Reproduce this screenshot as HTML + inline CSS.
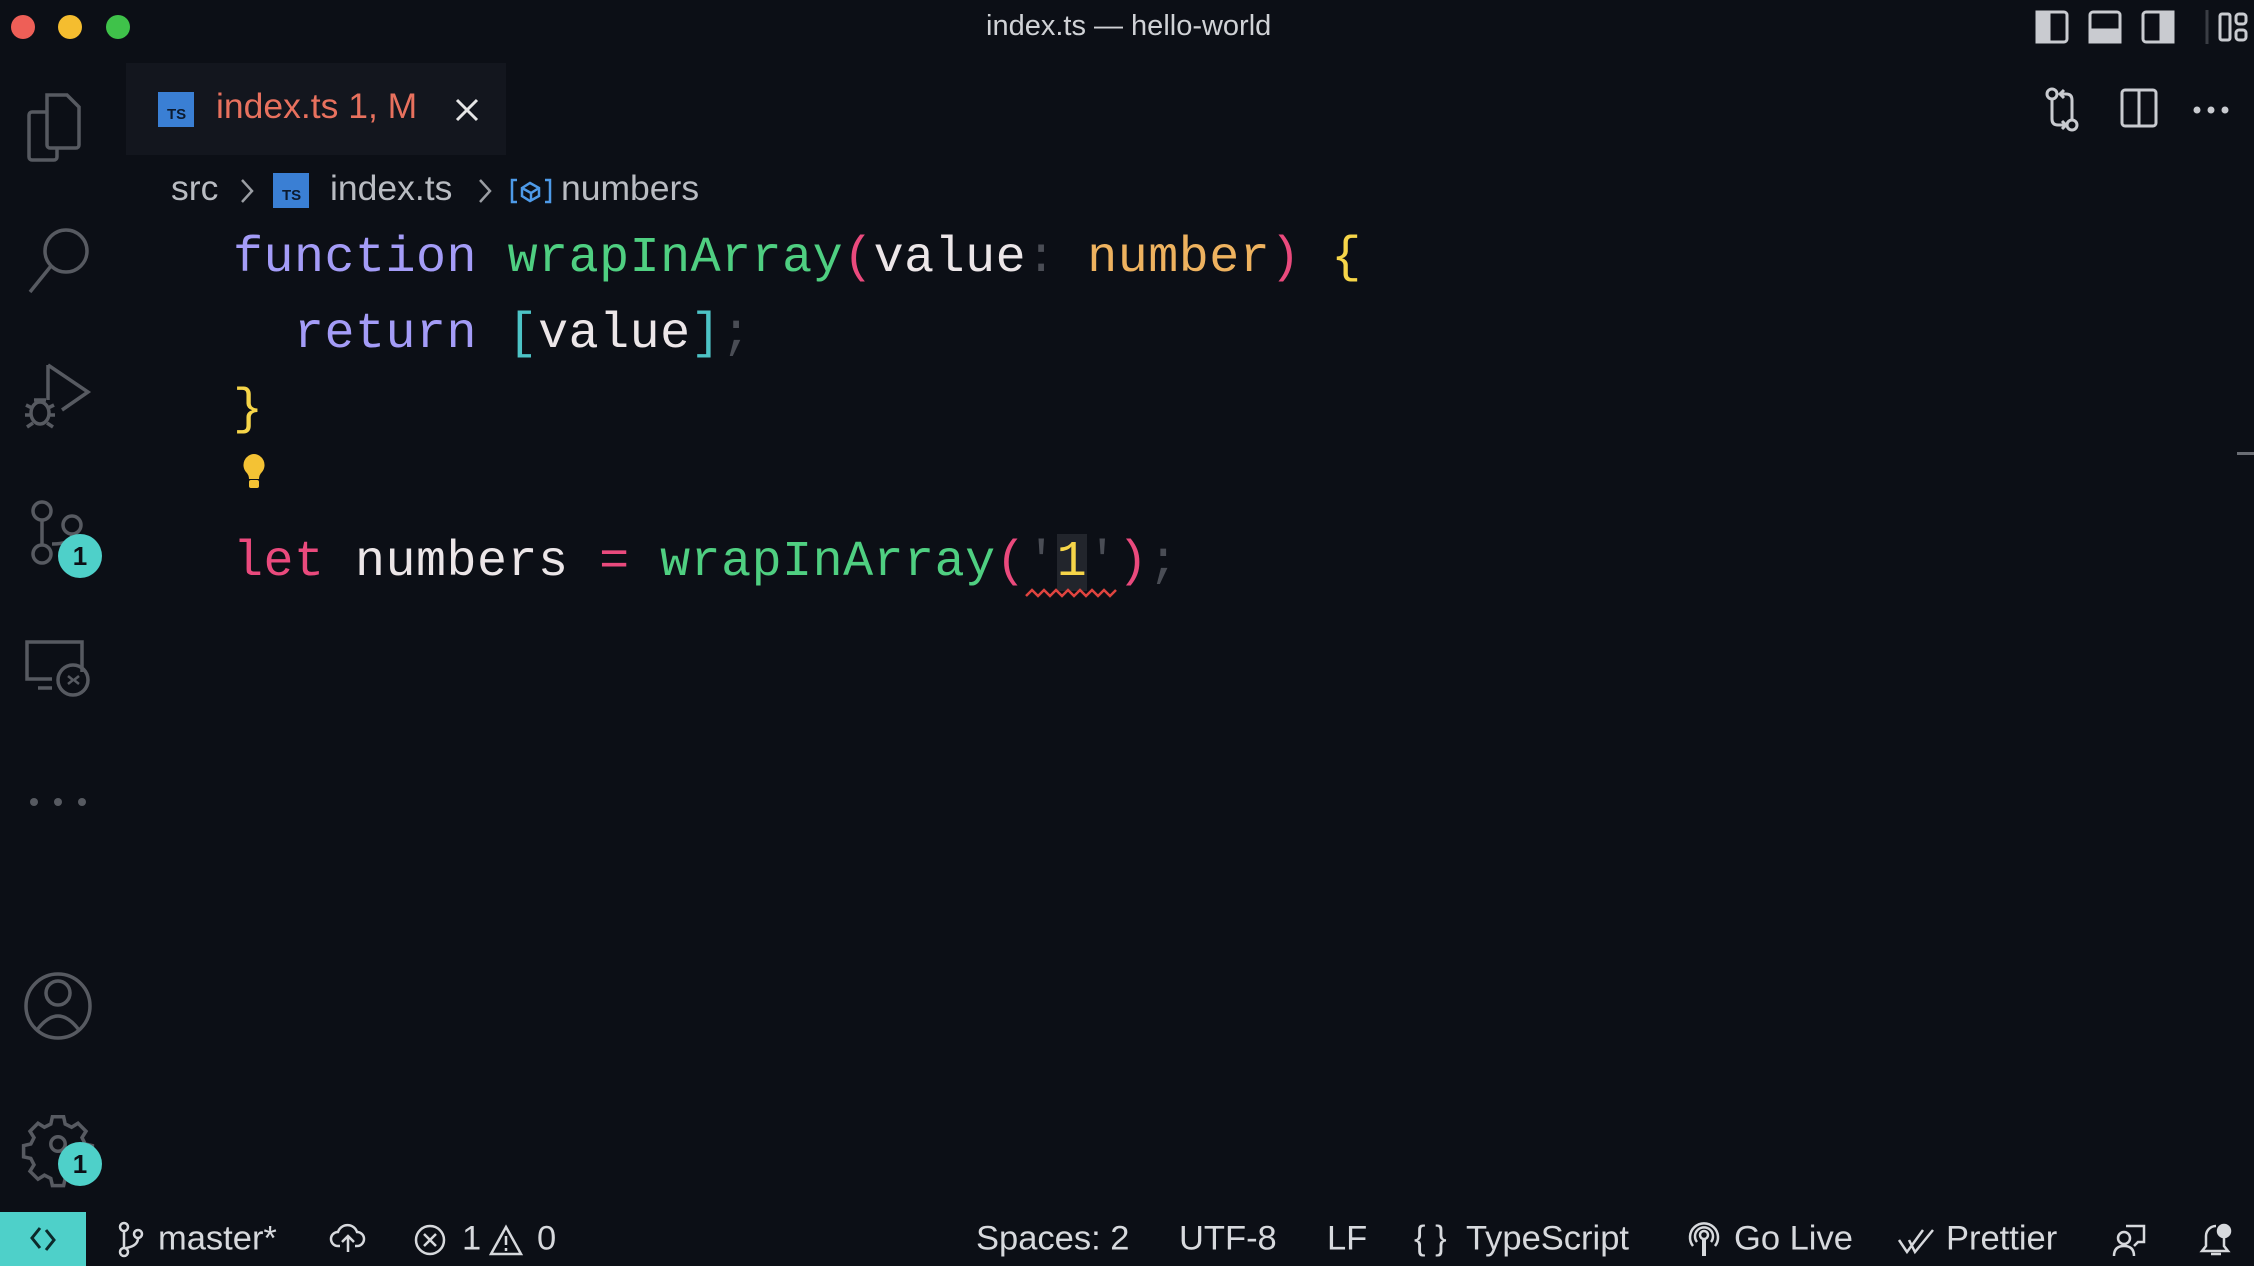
<!DOCTYPE html>
<html><head><meta charset="utf-8"><style>
*{margin:0;padding:0;box-sizing:border-box}
body{width:2254px;height:1266px;background:#0c0f16;position:relative;overflow:hidden;font-family:"Liberation Sans",sans-serif;color:#cfd2d8}
.a{position:absolute}
.dot{position:absolute;width:24px;height:24px;border-radius:50%;top:15px}
.code{position:absolute;left:233px;font-family:"Liberation Mono",monospace;font-size:50px;line-height:76px;white-space:pre;letter-spacing:0.5px}
.ln{position:absolute;left:0;height:76px}
.pu{color:#a49cf7}.gr{color:#4fcf81}.wh{color:#ece6e8}.or{color:#eeb25f}.pk{color:#ea4a7d}.ye{color:#f6d549}.tq{color:#4dc3c6}.gy{color:#4a4d55}
.sb{position:absolute;top:1239px;transform:translateY(-50%);font-size:34.5px;color:#d7d9dd;white-space:nowrap}
.badge{position:absolute;width:44px;height:44px;border-radius:50%;background:#4ed0c9;color:#0c0f16;font-weight:bold;font-size:26px;text-align:center;line-height:44px}
svg{position:absolute;overflow:visible}
</style></head><body>
<div class="dot" style="left:11px;background:#ee5f57"></div>
<div class="dot" style="left:58px;background:#f5bd2f"></div>
<div class="dot" style="left:106px;background:#3fc24a"></div>
<div class="a" style="left:986px;top:10px;font-size:29px;color:#d0d2d6">index.ts — hello-world</div>

<svg style="left:2035px;top:10px" width="220" height="34" fill="none" stroke="#c9cbd0" stroke-width="3">
<rect x="2" y="2" width="30" height="30" rx="3"/><rect x="2" y="2" width="12" height="30" fill="#c9cbd0"/>
<rect x="55" y="2" width="30" height="30" rx="3"/><rect x="55" y="20" width="30" height="12" fill="#c9cbd0"/>
<rect x="108" y="2" width="30" height="30" rx="3"/><rect x="126" y="2" width="12" height="30" fill="#c9cbd0"/>
<line x1="172" y1="0" x2="172" y2="34" stroke="#3a3d44"/>
<rect x="185" y="4" width="10" height="26" rx="2"/><rect x="201" y="4" width="10" height="10" rx="3"/><rect x="201" y="20" width="10" height="10" rx="3"/>
</svg>
<svg style="left:2040px;top:88px" width="210" height="44" fill="none" stroke="#c9cbd0" stroke-width="3">
<circle cx="12" cy="6" r="5"/><path d="M12 11v20q0 6 6 6h8M22 33l4 4-4 4"/><circle cx="32" cy="37" r="5"/><path d="M32 32V12q0-6-6-6h-6M24 2l-4 4 4 4"/>
<rect x="82" y="2" width="34" height="36" rx="3"/><line x1="99" y1="2" x2="99" y2="38"/>
<circle cx="157" cy="22" r="2" fill="#c9cbd0"/><circle cx="171" cy="22" r="2" fill="#c9cbd0"/><circle cx="185" cy="22" r="2" fill="#c9cbd0"/>
</svg>

<div class="a" style="left:126px;top:63px;width:380px;height:92px;background:#13161e"></div>
<div class="a" style="left:158px;top:92px;width:36px;height:35px;background:#3a7fd4;color:#0c1a2e;font-size:15px;font-weight:bold;padding:14px 0 0 9px;line-height:18px">TS</div>
<div class="a" style="left:216px;top:86px;font-size:35.5px;color:#e8715e">index.ts 1, M</div>
<svg style="left:456px;top:99px" width="22" height="22" stroke="#e6e6e6" stroke-width="3"><path d="M1 1L21 21M21 1L1 21"/></svg>

<div class="a" style="left:171px;top:168px;font-size:35.5px;color:#b9bcc2;white-space:nowrap">src</div>
<svg style="left:240px;top:178px" width="14" height="26" fill="none" stroke="#9a9da3" stroke-width="2.5"><path d="M2 2l10 11-10 11"/></svg>
<div class="a" style="left:273px;top:173px;width:36px;height:35px;background:#3a7fd4;color:#0c1a2e;font-size:15px;font-weight:bold;padding:14px 0 0 9px;line-height:18px">TS</div>
<div class="a" style="left:330px;top:168px;font-size:35.5px;color:#b9bcc2">index.ts</div>
<svg style="left:478px;top:178px" width="14" height="26" fill="none" stroke="#9a9da3" stroke-width="2.5"><path d="M2 2l10 11-10 11"/></svg>
<svg style="left:510px;top:178px" width="42" height="26" fill="none" stroke="#4e9ae8" stroke-width="2.5"><path d="M7 2H2v22h5M35 2h5v22h-5"/><path d="M12 10l8-5 9 5v8l-9 5-8-5z"/><path d="M12 10l9 5 8-5M21 15v8"/></svg>
<div class="a" style="left:561px;top:168px;font-size:35.5px;color:#b9bcc2">numbers</div>

<div class="code" style="top:221px">
<div class="ln" style="top:0"><span class="pu">function</span> <span class="gr">wrapInArray</span><span class="pk">(</span><span class="wh">value</span><span class="gy">:</span> <span class="or">number</span><span class="pk">)</span> <span class="ye">{</span></div>
<div class="ln" style="top:76px">  <span class="pu">return</span> <span class="tq">[</span><span class="wh">value</span><span class="tq">]</span><span class="gy">;</span></div>
<div class="ln" style="top:152px"><span class="ye">}</span></div>
<div class="ln" style="top:304px"><span class="pk">let</span> <span class="wh">numbers</span> <span class="pk">=</span> <span class="gr">wrapInArray</span><span class="pk">(</span><span class="gy">'</span><span class="ye" style="background:#22252c">1</span><span class="gy">'</span><span class="pk">)</span><span class="gy">;</span></div>
</div>
<svg style="left:239px;top:452px" width="30" height="38"><path d="M15 2a11 11 0 0 0-8 18q3 3 3 7h10q0-4 3-7a11 11 0 0 0-8-18z" fill="#f4c234"/><rect x="10" y="28" width="10" height="8" rx="2" fill="#f4c234"/></svg>
<svg style="left:1026px;top:588px" width="96" height="12" fill="none" stroke="#e0443f" stroke-width="2.5"><path d="M0 8l6-6 6 6 6-6 6 6 6-6 6 6 6-6 6 6 6-6 6 6 6-6 6 6 6-6 6 6 6-6"/></svg>
<div class="a" style="left:2237px;top:452px;width:17px;height:3px;background:#6a6d74"></div>

<svg style="left:0;top:0" width="120" height="1200" fill="none" stroke="#575a61" stroke-width="3.5">
<path d="M47 95h20l12 12v38a3 3 0 0 1-3 3H50a3 3 0 0 1-3-3z"/><path d="M47 112H32a3 3 0 0 0-3 3v42a3 3 0 0 0 3 3h22a3 3 0 0 0 3-3v-9"/>
<circle cx="66" cy="251" r="21"/><path d="M51 266L30 292"/>
<path d="M48 365v35M48 365l40 27-26 18"/><ellipse cx="40" cy="413" rx="9" ry="11"/><path d="M26 405l6 3M54 405l-6 3M25 415h6M49 415h6M27 427l6-4M53 427l-6-4M34 400h12"/>
<circle cx="42" cy="511" r="9"/><circle cx="72" cy="525" r="9"/><circle cx="42" cy="554" r="9"/><path d="M42 520v25M72 534q0 10-20 10"/>
<path d="M82 672v-30H27v37h25M38 688h14"/><circle cx="73" cy="680" r="15"/><path d="M68 676l5 4-5 4M79 676l-5 4 5 4" stroke-width="2.5"/>
<circle cx="58" cy="1006" r="32"/><circle cx="58" cy="993" r="12"/><path d="M37 1030q21-28 42 0"/>
<g transform="translate(58 1144) scale(0.8) translate(-58 -1144)"><path d="M51 1110h14l2 9 8 4 8-5 10 10-5 8 4 8 9 2v14l-9 2-4 8 5 8-10 10-8-5-8 4-2 9H51l-2-9-8-4-8 5-10-10 5-8-4-8-9-2v-14l9-2 4-8-5-8 10-10 8 5 8-4z" stroke-width="4.4"/><circle cx="58" cy="1144" r="9" stroke-width="4.4"/></g>
</svg>
<svg style="left:30px;top:798px" width="60" height="8" fill="#575a61"><circle cx="4" cy="4" r="4"/><circle cx="28" cy="4" r="4"/><circle cx="52" cy="4" r="4"/></svg>
<div class="badge" style="left:58px;top:534px">1</div>
<div class="badge" style="left:58px;top:1142px">1</div>

<div class="a" style="left:0;top:1212px;width:86px;height:54px;background:#4ed0c9"></div>
<svg style="left:26px;top:1224px" width="34" height="30" fill="none" stroke="#0c2a2a" stroke-width="3"><path d="M14 4L6 14l8 10M20 6l8 10-8 10"/></svg>
<svg style="left:114px;top:1221px" width="40" height="36" fill="none" stroke="#d7d9dd" stroke-width="2.5">
<circle cx="10" cy="6" r="4"/><circle cx="10" cy="31" r="4"/><circle cx="24" cy="13" r="4"/><path d="M10 10v17M24 17q0 8-12 10"/></svg>
<div class="sb" style="left:158px">master*</div>
<svg style="left:330px;top:1224px" width="36" height="30" fill="none" stroke="#d7d9dd" stroke-width="2.5"><path d="M10 22H8a7 7 0 0 1 0-14 10 10 0 0 1 19 0 7 7 0 0 1 0 14h-2M18 28V13M12 18l6-6 6 6"/></svg>
<svg style="left:414px;top:1224px" width="130" height="32" fill="none" stroke="#d7d9dd" stroke-width="2.5"><circle cx="16" cy="16" r="14"/><path d="M10 10l12 12M22 10L10 22"/><path d="M92 3L77 30h30z"/><path d="M92 12v9M92 24v3"/></svg>
<div class="sb" style="left:462px">1</div>
<div class="sb" style="left:537px">0</div>
<div class="sb" style="left:976px">Spaces: 2</div>
<div class="sb" style="left:1179px">UTF-8</div>
<div class="sb" style="left:1327px">LF</div>
<div class="sb" style="left:1414px">{ }</div>
<div class="sb" style="left:1466px">TypeScript</div>
<svg style="left:1688px;top:1222px" width="32" height="36" fill="none" stroke="#d7d9dd" stroke-width="2.5"><circle cx="16" cy="13" r="4"/><path d="M9 20a9 9 0 1 1 14 0M5 24a14 14 0 1 1 22 0"/><path d="M16 17v17" stroke-width="4"/></svg>
<div class="sb" style="left:1734px">Go Live</div>
<svg style="left:1897px;top:1228px" width="40" height="26" fill="none" stroke="#d7d9dd" stroke-width="2.5"><path d="M2 12l8 12L26 2M12 12l6 12L36 2"/></svg>
<div class="sb" style="left:1946px">Prettier</div>
<svg style="left:2112px;top:1222px" width="36" height="36" fill="none" stroke="#d7d9dd" stroke-width="2.5"><circle cx="12" cy="16" r="6"/><path d="M2 34q0-10 10-10t10 10M14 4h18v16h-6l-4 4"/></svg>
<svg style="left:2198px;top:1222px" width="36" height="36" fill="none" stroke="#d7d9dd" stroke-width="2.5"><path d="M18 4a10 10 0 0 0-10 10v10l-4 5h26l-4-5V14M13 32h10"/><circle cx="26" cy="9" r="6" fill="#d7d9dd"/></svg>
</body></html>
